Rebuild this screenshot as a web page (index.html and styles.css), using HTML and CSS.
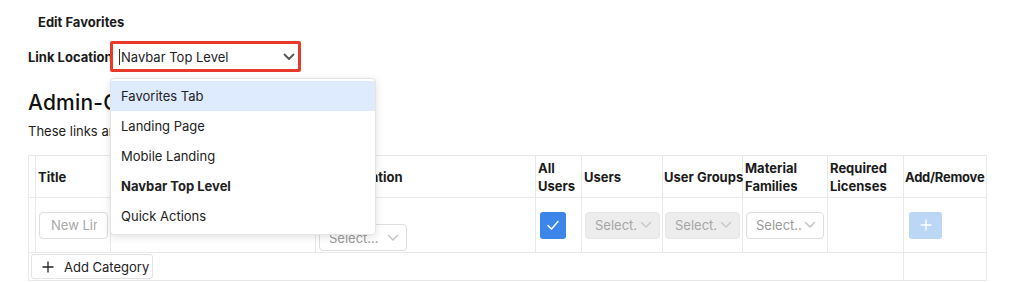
FILE: index.html
```html
<!DOCTYPE html>
<html>
<head>
<meta charset="utf-8">
<link rel="stylesheet" href="styles.css">
</head>
<body>
<div class="page">
  <div class="page-title">Edit Favorites</div>
  <div class="loc-row">
    <span class="loc-label">Link Location</span>
    <div class="select-wrap">
      <div class="control focused">
        <span class="caret"></span>
        <span class="control-value">Navbar Top Level</span>
        <svg class="chev-dark" width="12" height="8" viewBox="0 0 12 8"><path d="M1.5 1.5 L6 6 L10.5 1.5" fill="none" stroke="#555" stroke-width="1.8" stroke-linecap="round" stroke-linejoin="round"/></svg>
      </div>
      <div class="menu">
        <div class="option active">Favorites Tab</div>
        <div class="option">Landing Page</div>
        <div class="option">Mobile Landing</div>
        <div class="option selected">Navbar Top Level</div>
        <div class="option">Quick Actions</div>
      </div>
    </div>
  </div>
  <h2 class="section-title">Admin-Configured Links</h2>
  <p class="section-desc">These links are available to all users.</p>
  <table class="grid">
    <colgroup>
      <col class="c-drag"><col class="c-title"><col class="c-url"><col class="c-loc"><col class="c-all"><col class="c-users"><col class="c-groups"><col class="c-mat"><col class="c-lic"><col class="c-add">
    </colgroup>
    <thead>
      <tr>
        <th></th>
        <th>Title</th>
        <th>URL</th>
        <th>Link Location</th>
        <th>All Users</th>
        <th>Users</th>
        <th class="nowrap">User Groups</th>
        <th>Material Families</th>
        <th>Required Licenses</th>
        <th class="nowrap tight">Add/Remove</th>
      </tr>
    </thead>
    <tbody>
      <tr class="body-row">
        <td></td>
        <td><div class="text-input"><span class="placeholder">New Link</span></div></td>
        <td></td>
        <td class="loc-cell">
          <div class="sel w-loc"><span class="sel-val">Select...</span><svg class="chev" width="12" height="8" viewBox="0 0 12 8"><path d="M1.5 1.5 L6 6 L10.5 1.5" fill="none" stroke="#c4c4c4" stroke-width="1.5" stroke-linecap="round" stroke-linejoin="round"/></svg></div>
        </td>
        <td><div class="check"><svg width="14" height="12" viewBox="0 0 14 12"><path d="M2 6.5 L5.5 10 L12 2.5" fill="none" stroke="#fff" stroke-width="1.5" stroke-linecap="round" stroke-linejoin="round"/></svg></div></td>
        <td><div class="sel disabled w-users"><span class="sel-val">Select...</span><svg class="chev" width="12" height="8" viewBox="0 0 12 8"><path d="M1.5 1.5 L6 6 L10.5 1.5" fill="none" stroke="#c8c8c8" stroke-width="1.5" stroke-linecap="round" stroke-linejoin="round"/></svg></div></td>
        <td><div class="sel disabled w-groups"><span class="sel-val">Select...</span><svg class="chev" width="12" height="8" viewBox="0 0 12 8"><path d="M1.5 1.5 L6 6 L10.5 1.5" fill="none" stroke="#c8c8c8" stroke-width="1.5" stroke-linecap="round" stroke-linejoin="round"/></svg></div></td>
        <td><div class="sel w-mat"><span class="sel-val">Select...</span><svg class="chev" width="12" height="8" viewBox="0 0 12 8"><path d="M1.5 1.5 L6 6 L10.5 1.5" fill="none" stroke="#c4c4c4" stroke-width="1.5" stroke-linecap="round" stroke-linejoin="round"/></svg></div></td>
        <td></td>
        <td><div class="add-btn"><svg width="12" height="12" viewBox="0 0 12 12"><path d="M6 1 V11 M1 6 H11" stroke="#fff" stroke-width="1.3" stroke-linecap="round"/></svg></div></td>
      </tr>
      <tr class="foot-row">
        <td colspan="9">
          <div class="cat-btn"><svg width="12" height="12" viewBox="0 0 12 12"><path d="M6 0.5 V11.5 M0.5 6 H11.5" stroke="#222" stroke-width="1.3"/></svg><span>Add Category</span></div>
        </td>
        <td></td>
      </tr>
    </tbody>
  </table>
</div>
</body>
</html>
```
FILE: styles.css
```css
* { box-sizing: border-box; }
html, body { margin: 0; padding: 0; background: #fff; }
body {
  font-family: Inter, "Noto Sans", "Liberation Sans", sans-serif;
  font-size: 13px;
  color: #1b1b1b;
}
.page { padding: 13px 0 0 28px; width: 1024px; height: 282px; overflow: hidden; }
.page-title { font-weight: 700; line-height: 18px; margin-left: 10px; }
.loc-row { display: flex; align-items: center; margin-top: 10px; height: 31px; position: relative; z-index: 2; }
.loc-label { font-weight: 700; width: 82px; white-space: nowrap; }
.select-wrap { position: relative; }
.control {
  width: 191px; height: 31px; border: 3px solid #e8392b; border-radius: 2px;
  display: flex; align-items: center; padding: 0 3px 0 6px; background: #fff;
}
.caret { width: 1px; height: 16px; background: #333; margin-right: 1px; }
.control-value { flex: 1; white-space: nowrap; color: #222; }
.chev-dark { display: block; }
.menu {
  position: absolute; top: 37px; left: 0; width: 266px;
  background: #fff; border: 1px solid #e4e4e4; border-radius: 4px;
  box-shadow: 0 2px 8px rgba(0,0,0,0.12); padding: 2px 0 3px;
}
.option { height: 30px; line-height: 30px; padding: 0 10px; color: #222; }
.option.active { background: #deebff; }
.option.selected { font-weight: 700; }
.section-title { font-size: 21px; font-weight: 500; line-height: 24px; margin: 19px 0 0; color: #111; letter-spacing: 0.2px; }
.section-desc { margin: 7px 0 0; line-height: 18px; }
.grid { margin-top: 15px; border-collapse: collapse; table-layout: fixed; width: 958px; }
.grid th, .grid td { border: 1px solid #e9e9e9; padding: 0 2px; }
.c-drag { width: 7px; }
.c-title { width: 75px; }
.c-url { width: 205px; }
.c-loc { width: 220px; }
.c-all { width: 46px; }
.c-users { width: 81px; }
.c-groups { width: 80px; }
.c-mat { width: 85px; }
.c-lic { width: 76px; }
.c-add { width: 83px; }
.grid th { height: 42px; text-align: left; font-weight: 700; line-height: 18px; vertical-align: middle; white-space: normal; }
.grid th.nowrap { white-space: nowrap; padding: 0 1px; overflow: visible; }
.grid th.tight { letter-spacing: -0.25px; }
.body-row td { height: 55px; vertical-align: middle; padding: 0 3px; }
.body-row td.loc-cell { vertical-align: bottom; padding-bottom: 1px; }
.text-input {
  width: 69px; height: 27px; border: 1px solid #dedede; border-radius: 4px;
  padding: 0 0 0 11px; line-height: 25px; color: #a8a8a8;
}
.placeholder { display: block; width: 46px; white-space: nowrap; overflow: hidden; }
.sel {
  height: 27px; border: 1px solid #dedede; border-radius: 4px; background: #fff;
  display: flex; align-items: center; padding: 0 7px 0 9px; gap: 3px;
}
.sel-val { flex: 1; min-width: 0; white-space: nowrap; overflow: hidden; color: #9a9a9a; }
.sel.disabled { background: #ededed; border-color: #e6e6e6; }
.sel.disabled .sel-val { color: #a5a5a5; }
.chev { flex: none; display: block; }
.w-loc { width: 88px; }
.w-users { width: 75px; }
.w-groups { width: 75px; margin-left: -1px; }
.w-mat { width: 78px; }
.check {
  width: 26px; height: 27px; background: #3b86e8; border-radius: 3px; margin-left: 1px;
  display: flex; align-items: center; justify-content: center;
}
.add-btn {
  width: 33px; height: 27px; background: #bcd6f6; border-radius: 3px; margin-left: 2px;
  display: flex; align-items: center; justify-content: center;
}
.foot-row td { height: 28px; padding: 0 2px; vertical-align: middle; }
.cat-btn {
  display: inline-flex; align-items: center; height: 25px; width: 122px;
  border: 1px solid #e4e4e4; border-radius: 3px; padding: 0 0 0 10px; gap: 10px; color: #222;
}
.cat-btn svg { display: block; }
```
